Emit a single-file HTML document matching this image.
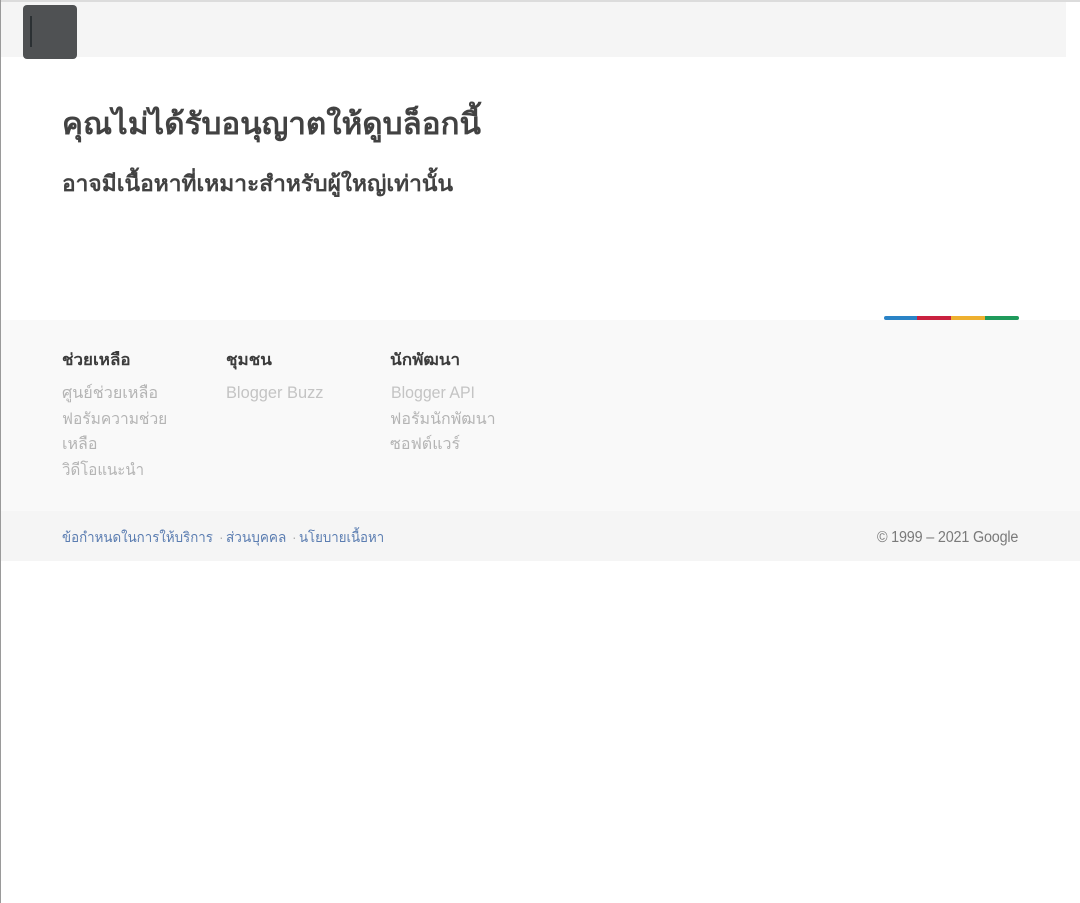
<!DOCTYPE html>
<html lang="th">
<head>
<meta charset="utf-8">
<title>คุณไม่ได้รับอนุญาตให้ดูบล็อกนี้</title>
<style>
html,body{margin:0;padding:0;background:#fff}
body{width:1080px;height:903px;position:relative;overflow:hidden;font-family:"Liberation Sans","DejaVu Sans","Noto Sans CJK SC",sans-serif;filter:blur(.3px)}
.a{position:absolute;white-space:nowrap;transform-origin:0 50%}
a{text-decoration:none;color:inherit}
.h{top:350px;font-size:16px;line-height:22px;font-weight:700;color:#3c3c3c}
.l{font-size:16px;line-height:25.6px;color:#b4b4b4}
.e{font-size:16.4px;line-height:25.6px;color:#c4c4c4}
.f{top:526px;font-size:14px;line-height:22px;color:#5b7db1}
.d{top:526px;font-size:14px;line-height:22px;color:#b0b0b0}
</style>
</head>
<body>
<div class="a" style="left:1px;top:0;width:1079px;height:2px;background:#dcdcdc"></div>
<div class="a" style="left:1px;top:2px;width:1065px;height:55px;background:#f5f5f5"></div>
<div class="a" style="left:23px;top:5px;width:54px;height:54px;border-radius:4px;background:#4f5153"></div>
<div class="a" style="left:30px;top:16px;width:2px;height:31px;background:#2b3033"></div>

<div class="a" style="left:62px;top:106px;font-size:30px;line-height:38px;font-weight:700;color:#424242;transform:scaleX(1.045)">คุณไม่ได้รับอนุญาตให้ดูบล็อกนี้</div>
<div class="a" style="left:62px;top:169px;font-size:22px;line-height:30px;font-weight:700;color:#424242;transform:scaleX(1.034)">อาจมีเนื้อหาที่เหมาะสำหรับผู้ใหญ่เท่านั้น</div>

<div class="a" style="left:0;top:320px;width:1080px;height:191px;background:#f9f9f9"></div>
<div class="a" style="left:0;top:511px;width:1080px;height:50px;background:#f5f5f5"></div>
<div class="a" style="left:0;top:0;width:1px;height:903px;background:#9a9a9a"></div>

<div class="a" style="left:884px;top:316px;width:34px;height:4px;background:#2a83c6;border-radius:2px 0 0 2px"></div>
<div class="a" style="left:917px;top:316px;width:34px;height:4px;background:#c9213f"></div>
<div class="a" style="left:951px;top:316px;width:34px;height:4px;background:#eeb02f"></div>
<div class="a" style="left:985px;top:316px;width:34px;height:4px;background:#1f9a5b;border-radius:0 2px 2px 0"></div>

<div class="a h" style="left:62px;transform:scaleX(1.06)">ช่วยเหลือ</div>
<div class="a l" style="left:62px;top:381px;transform:scaleX(1.01)">ศูนย์ช่วยเหลือ</div>
<div class="a l" style="left:62px;top:407px;transform:scaleX(.97)">ฟอรัมความช่วย</div>
<div class="a l" style="left:62px;top:432px">เหลือ</div>
<div class="a l" style="left:62px;top:458px;transform:scaleX(.94)">วิดีโอแนะนำ</div>

<div class="a h" style="left:226px;transform:scaleX(1.06)">ชุมชน</div>
<div class="a e" style="left:226px;top:381px">Blogger Buzz</div>

<div class="a h" style="left:390px;transform:scaleX(1.07)">นักพัฒนา</div>
<div class="a e" style="left:391px;top:381px;transform:scaleX(.97)">Blogger API</div>
<div class="a l" style="left:390px;top:407px">ฟอรัมนักพัฒนา</div>
<div class="a l" style="left:390px;top:432px">ซอฟต์แวร์</div>

<div class="a f" style="left:62px;transform:scaleX(.95)"><a href="#">ข้อกำหนดในการให้บริการ</a></div>
<div class="a d" style="left:219px">·</div>
<div class="a f" style="left:226px;transform:scaleX(.97)"><a href="#">ส่วนบุคคล</a></div>
<div class="a d" style="left:292px">·</div>
<div class="a f" style="left:299px;transform:scaleX(.945)"><a href="#">นโยบายเนื้อหา</a></div>
<div class="a" style="right:62px;top:527px;font-size:15.5px;line-height:22px;color:#7a7a7a;letter-spacing:-.2px;transform-origin:100% 50%;transform:scaleX(.928)">© 1999 – 2021 Google</div>
</body>
</html>
